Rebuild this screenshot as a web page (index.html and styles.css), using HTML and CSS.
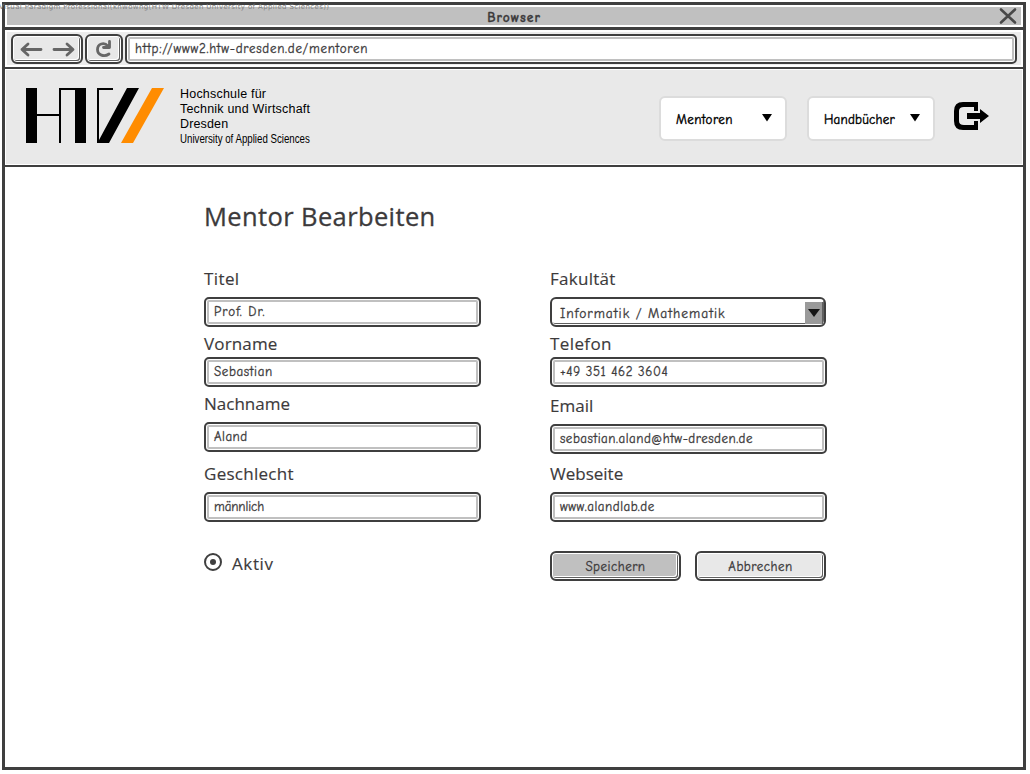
FILE: index.html
```
<!DOCTYPE html>
<html lang="de">
<head>
<meta charset="utf-8">
<title>Mentor Bearbeiten</title>
<link rel="stylesheet" href="styles.css">
</head>
<body>
<div class="watermark">Visual Paradigm Professional(khwowng(HTW Dresden University of Applied Sciences))</div>
<div class="window">
  <div class="titlebar">
    <span class="title">Browser</span>
    <svg class="close" width="18" height="18" viewBox="0 0 18 18"><path d="M2 2.500L16 15.500M16 2.500L2 15.500"/></svg>
  </div>
  <div class="toolbar">
    <div class="tool history">
      <svg width="64" height="24" viewBox="0 0 64 24"><path d="M7 12.500H26M13 7L7 12.500L13 18M39 12.500H57.500M52 7L58 12.500L52 18"/></svg>
    </div>
    <div class="tool reload">
      <svg width="32" height="24" viewBox="0 0 32 24"><path d="M21 17C16 20.500 9.500 18 9.500 12.500C9.500 7 16 4.500 20 9.200M21.500 4.500V10.500H15.500"/></svg>
    </div>
    <div class="address"><span class="url">http://www2.htw-dresden.de/mentoren</span></div>
  </div>
  <header class="header">
    <svg class="logo" width="138" height="55" viewBox="0 0 138 55">
      <path d="M0 0H11V26H33V0H60V55H49V2H35V55H33V28H11V55H0Z"/>
      <path d="M71 0H87V2H73V52L101 0H113L83 55H71Z"/>
      <path class="logo-accent" d="M126 0H138L107 55H95Z"/>
    </svg>
    <div class="school">
      <div class="s1">Hochschule für</div><div class="s2">Technik und Wirtschaft</div><div class="s3">Dresden</div><div class="s4">University of Applied Sciences</div>
    </div>
    <nav class="nav">
      <div class="menu"><span class="m1">Mentoren</span><svg width="10" height="8" viewBox="0 0 10 8"><path d="M0 0H10L5 7.500Z"/></svg></div>
      <div class="menu"><span class="m2">Handbücher</span><svg width="10" height="8" viewBox="0 0 10 8"><path d="M0 0H10L5 7.500Z"/></svg></div>
      <svg class="logout" width="36" height="30" viewBox="0 0 36 30"><path d="M24 1H9Q0 1 0 10V20Q0 29 9 29H24V20H20V24H10Q5 24 5 20V10Q5 6 10 6H20V10H24Z"/><path d="M13 12H26V8L35 15L26 22V18H13Z"/></svg>
    </nav>
  </header>
  <main class="page">
    <h1>Mentor Bearbeiten</h1>
    <form class="form">
      <div class="column">
        <div class="field f1"><label class="l-titel">Titel</label><div class="input"><span class="v1">Prof. Dr.</span></div></div>
        <div class="field f2"><label class="l-vor">Vorname</label><div class="input"><span class="v2">Sebastian</span></div></div>
        <div class="field f3"><label>Nachname</label><div class="input"><span class="v3">Aland</span></div></div>
        <div class="field f4"><label class="l-ges">Geschlecht</label><div class="input"><span class="v4">männlich</span></div></div>
        <div class="radio"><svg width="18" height="18" viewBox="0 0 18 18"><circle class="ring" cx="9" cy="9" r="8"/><circle cx="9" cy="9" r="3"/></svg><span class="l-aktiv">Aktiv</span></div>
      </div>
      <div class="column">
        <div class="field f1"><label class="l-fak">Fakultät</label><div class="select"><span class="v5">Informatik / Mathematik</span><div class="arrow"><svg width="12" height="8" viewBox="0 0 12 8"><path d="M0 0H12L6 8Z"/></svg></div></div></div>
        <div class="field f2"><label class="l-tel">Telefon</label><div class="input"><span class="v6">+49 351 462 3604</span></div></div>
        <div class="field f3 email"><label>Email</label><div class="input"><span class="v7">sebastian.aland@htw-dresden.de</span></div></div>
        <div class="field f4 web"><label>Webseite</label><div class="input"><span class="v8">www.alandlab.de</span></div></div>
        <div class="actions"><div class="button primary"><span class="b1">Speichern</span></div><div class="button"><span class="b1">Abbrechen</span></div></div>
      </div>
    </form>
  </main>
</div>
</body>
</html>
```
FILE: styles.css
```
* { box-sizing: border-box; }
body { margin: 0; padding: 2px; width: 1030px; height: 774px; overflow: hidden; background: #fff; color: #3c3a3b; font-family: "Comic Sans MS", "Comic Neue", Lato, sans-serif; font-size: 13px; white-space: nowrap; -webkit-text-stroke: .3px currentColor; }
svg { display: block; flex: none; }
.watermark { position: absolute; left: -1px; top: 2px; z-index: 2; font: 7px/11px "DejaVu Sans", sans-serif; letter-spacing: .37px; color: #808080; -webkit-text-stroke: 0; }
.window { width: 1024px; height: 768px; border: 3px solid #3f3f3f; background: #fff; }

.titlebar { height: 22px; border: 2px solid #fff; background: #c0c0c0; display: flex; align-items: center; justify-content: center; position: relative; }
.title { font-weight: 700; font-size: 13.5px; letter-spacing: 1px; line-height: 18px; padding-top: 3px; }
.close { position: absolute; right: 4px; top: 0; fill: none; stroke: #484848; stroke-width: 2.6; stroke-linecap: round; }

.toolbar { height: 42px; border-top: 3px solid #3f3f3f; border-bottom: 2px solid #3f3f3f; background: #ececec; box-shadow: inset 0 0 0 2px #fff; display: flex; gap: 2px; padding: 4px 6px 3px; }
.tool { height: 30px; border: 2px solid #3f3f3f; border-radius: 6px; background: #e8e8e8; box-shadow: inset 0 0 0 1px #fff, inset -1px -1px 0 1px #606060, inset -2px -2px 0 1px #fff; display: flex; align-items: center; justify-content: center; }
.tool svg { fill: none; stroke: #666; stroke-width: 2.8; stroke-linecap: round; stroke-linejoin: round; }
.history { width: 72px; }
.reload { width: 38px; }
.address { flex: 1; height: 30px; border: 2px solid #3f3f3f; border-radius: 5px; background: #fff; box-shadow: inset 0 0 0 1px #fff, inset 0 0 0 3px #c0c0c0; padding: 0 8px; line-height: 26px; }
.url { letter-spacing: .72px; }

.header { height: 98px; border-bottom: 2px solid #3f3f3f; background: #e9e9e9; box-shadow: inset 0 0 0 1px #fff; display: flex; align-items: flex-start; padding-left: 21px; color: #000; }
.logo { margin-top: 19px; }
.logo-accent { fill: #ff8c00; }
.school { margin: 18px 0 0 16px; width: 130px; font: 12.5px/15px "Liberation Sans", sans-serif; -webkit-text-stroke: 0; }
.s1, .s2 { letter-spacing: .2px; }
.s3 { letter-spacing: .15px; }
.s4 { transform: scaleX(.775); transform-origin: left; }
.nav { display: flex; margin: 27px 0 0 349px; }
.menu { width: 128px; height: 45px; margin-right: 20px; border: 2px solid #dcdcdc; border-radius: 6px; background: #fff; display: flex; align-items: center; justify-content: space-between; padding: 2px 13px 0 15px; -webkit-text-stroke: .4px #000; }
.m1 { letter-spacing: .42px; }
.m2 { letter-spacing: .22px; }
.menu svg { margin-top: -4px; }
.logout { margin-top: 5px; margin-left: -1px; }

.page { padding: 31px 0 0 199px; }
h1 { margin: 0; font: 25.5px/36px "Open Sans", sans-serif; letter-spacing: .38px; }
.form { display: flex; gap: 69px; margin-top: 32px; }
.column { width: 277px; }
label, .l-aktiv { font: 17px/24px "Open Sans", sans-serif; -webkit-text-stroke: .15px #3c3a3b; }
label { display: block; height: 24px; }
.l-titel, .l-tel { letter-spacing: .4px; }
.l-vor { letter-spacing: .15px; }
.l-ges, .l-fak { letter-spacing: .28px; }
.l-aktiv { letter-spacing: .6px; padding-top: 2px; }
.f1 label { padding-top: 1px; margin-bottom: 7px; }
.f2 { margin-top: 5px; }
.f2 label { margin-bottom: 1px; }
.f3 { margin-top: 5px; }
.f3 label { margin-bottom: 6px; }
.f4 { margin-top: 10px; }
.f4 label { margin-bottom: 6px; }
.email { margin-top: 7px; }
.web { margin-top: 8px; }
.input, .select { height: 30px; border: 2px solid #3f3f3f; border-radius: 5px; background: #fff; padding: 0 8px; line-height: 26px; }
.input { box-shadow: inset 0 0 0 1px #fff, inset 0 0 0 3px #c0c0c0; }
.v1 { letter-spacing: 1.05px; }
.v2, .v6 { letter-spacing: .6px; }
.v3, .v7, .v8 { letter-spacing: .5px; }
.v4 { letter-spacing: -.1px; }
.v5 { font-size: 13.5px; letter-spacing: .98px; }
.b1 { letter-spacing: .5px; }
.select { width: 276px; display: flex; align-items: center; justify-content: space-between; padding: 2px 1px 1px 8px; border-radius: 6px; box-shadow: inset 0 -1px 0 #fff, inset -1px -2px 0 #606060; }
.select span { padding-top: 3px; }
.arrow { width: 18px; height: 22px; background: #9a9a9a; border-right: 1px solid #606060; display: flex; align-items: center; justify-content: center; }
.arrow svg { fill: #151515; }
.radio { display: flex; align-items: center; height: 24px; margin-top: 29px; gap: 10px; }
.radio svg { fill: #3f3f3f; margin-top: -2px; }
.ring { fill: #fff; stroke: #3f3f3f; stroke-width: 2; }
.actions { display: flex; gap: 14px; margin-top: 29px; }
.button { width: 131px; height: 30px; border: 2px solid #3f3f3f; border-radius: 6px; background: #e8e8e8; box-shadow: inset 0 0 0 1px #fff, inset -1px -1px 0 1px #606060, inset -2px -2px 0 1px #fff; text-align: center; line-height: 27px; }
.primary { background: #c0c0c0; }
```
